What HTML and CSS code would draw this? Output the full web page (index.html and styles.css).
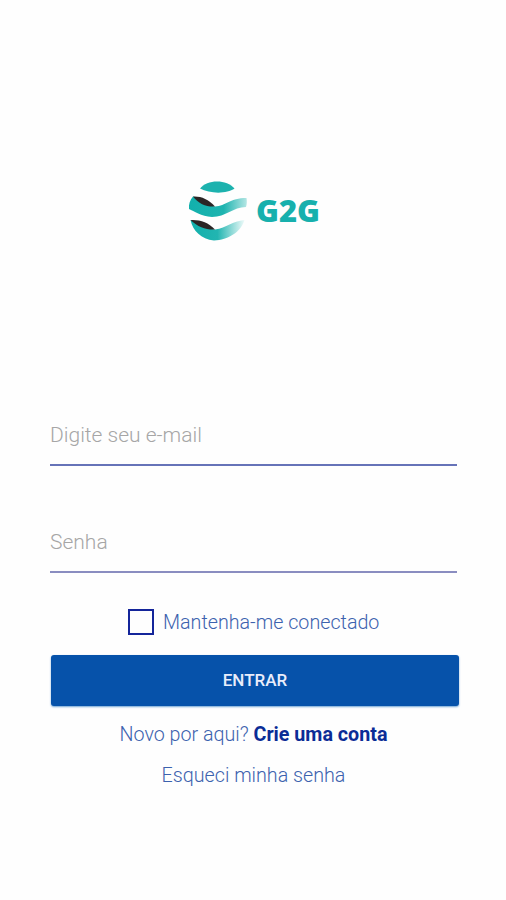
FILE: index.html
```html
<!DOCTYPE html>
<html lang="pt-BR">
<head>
    <meta charset="utf-8">
    <title>G2G</title>
    <link rel="stylesheet" href="styles.css">
</head>
<body>
    <div class="logo">
        <svg width="140" height="64" viewBox="0 0 140 64">
            <defs>
                <linearGradient id="band">
                    <stop offset="0" stop-color="#12b0ac"/>
                    <stop offset="0.6" stop-color="#1eb4b0"/>
                    <stop offset="1" stop-color="#b4e6e4"/>
                </linearGradient>
                <linearGradient id="bandLow">
                    <stop offset="0" stop-color="#12b0ac"/>
                    <stop offset="0.5" stop-color="#22b5b1"/>
                    <stop offset="1" stop-color="#eefaf9"/>
                </linearGradient>
            </defs>
            <path fill="#1cb2ae" d="M14 9.5 C21 0 41 0 48.500 9.500 C41 15 24 15 14 9.500 Z"/>
            <path fill="url(#band)" d="M7 17.500 C14 19 22 27 29 27.500 C40 27 44 19 60.500 19 C61 22 61 25 60 28 C47 28 40 38 26 38 C15 37.500 8 32 3 30 C2.500 25 4 21 7 17.500 Z"/>
            <path fill="#2b2525" d="M7 17.500 C15 17 22 20 29 27.500 C20 28 13 25 7 17.500 Z"/>
            <path fill="url(#bandLow)" d="M4.500 41 C13 43 21 50 29 50.500 C41 49 46 42 58.500 41 C55 53 42 61 28 61.500 C15 60 7 52 4.500 41 Z"/>
            <path fill="#2b2525" d="M4.500 41 C14 40.500 22 43 29 50.500 C20 51 12 48 4.500 41 Z"/>
            <text class="logo-text" x="70" y="43" textLength="64" lengthAdjust="spacingAndGlyphs">G2G</text>
        </svg>
    </div>

    <form class="login">
        <input class="field" type="email" placeholder="Digite seu e-mail">
        <input class="field field-senha" type="password" placeholder="Senha">

        <label class="remember">
            <input type="checkbox">
            <span>Mantenha-me conectado</span>
        </label>

        <button class="entrar" type="submit">ENTRAR</button>
    </form>

    <div class="link">Novo por aqui? <b>Crie uma conta</b></div>
    <div class="link link-senha">Esqueci minha senha</div>
</body>
</html>
```

FILE: styles.css
```css
body {
    margin: 0;
    padding: 0 49px 0 50px;
    height: 900px;
    box-sizing: border-box;
    overflow: hidden;
    font-family: Roboto, sans-serif;
    font-weight: 300;
    font-size: 19.7px;
    color: #3c62ae;
    background-color: #fefefe;
}
.logo {
    height: 64px;
    padding: 179px 0 170px 136px;
}
.logo svg {
    display: block;
}
.logo-text {
    font-family: "Open Sans", sans-serif;
    font-weight: 800;
    font-size: 30.5px;
    fill: #17b0ad;
}
.login {
    display: flex;
    flex-direction: column;
}
.field {
    width: 407px;
    height: 53px;
    padding: 0 0 7px;
    box-sizing: border-box;
    border: none;
    border-bottom: 2px solid #6673b8;
    outline: none;
    background: none;
    font: inherit;
    font-size: 21px;
}
.field::placeholder {
    color: #a6a6a6;
    opacity: 1;
}
.field-senha {
    margin-top: 54px;
    border-bottom-color: #8a8dc0;
}
.remember {
    display: flex;
    align-items: center;
    height: 26px;
    margin: 36px 0 0 78px;
}
.remember input {
    appearance: none;
    width: 26px;
    height: 26px;
    margin: 0 9px 0 0;
    border: 2px solid #14259a;
}
.entrar {
    width: 408px;
    height: 51px;
    margin: 20px 0 0 1px;
    padding: 0 0 2px;
    border: none;
    border-radius: 3px;
    background-color: #0652aa;
    box-shadow: 0 1px 2px #6fa3d4;
    color: #e9edfb;
    font: inherit;
    font-weight: 500;
    font-size: 17px;
}
.link {
    margin-top: 17px;
    line-height: 24px;
    text-align: center;
}
.link b {
    font-weight: 700;
    color: #0b2c96;
}
```
